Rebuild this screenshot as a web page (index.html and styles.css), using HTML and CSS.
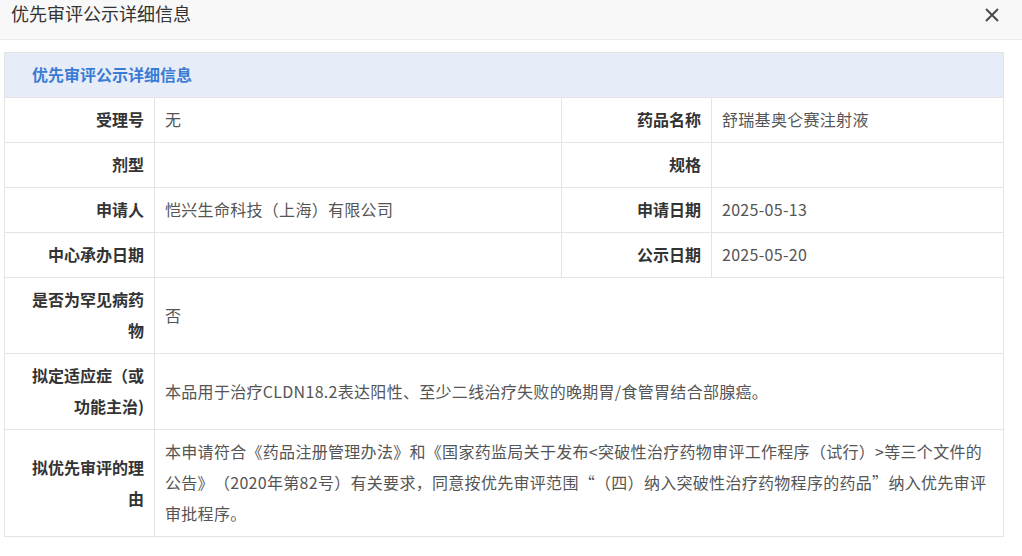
FILE: index.html
```html
<!DOCTYPE html>
<html lang="zh-CN">
<head>
    <meta charset="utf-8">
    <title>优先审评公示详细信息</title>
    <link rel="stylesheet" href="styles.css">
</head>
<body>
    <div class="dialog-header">
        <span class="dialog-title">优先审评公示详细信息</span>
        <span class="close-button">
            <svg width="16" height="16" viewBox="0 0 16 16">
                <path d="M2 2 L14 14 M14 2 L2 14" stroke="#4a4a4a" stroke-width="2" fill="none"/>
            </svg>
        </span>
    </div>

    <div class="dialog-body">
        <table class="detail-table">
            <colgroup>
                <col class="col-label">
                <col class="col-value">
                <col class="col-label">
                <col>
            </colgroup>
            <tr>
                <th colspan="4" class="table-caption">优先审评公示详细信息</th>
            </tr>
            <tr>
                <td class="label">受理号</td>
                <td class="value">无</td>
                <td class="label">药品名称</td>
                <td class="value">舒瑞基奥仑赛注射液</td>
            </tr>
            <tr>
                <td class="label">剂型</td>
                <td class="value"></td>
                <td class="label">规格</td>
                <td class="value"></td>
            </tr>
            <tr>
                <td class="label">申请人</td>
                <td class="value">恺兴生命科技（上海）有限公司</td>
                <td class="label">申请日期</td>
                <td class="value">2025-05-13</td>
            </tr>
            <tr>
                <td class="label">中心承办日期</td>
                <td class="value"></td>
                <td class="label">公示日期</td>
                <td class="value">2025-05-20</td>
            </tr>
            <tr>
                <td class="label">是否为罕见病药物</td>
                <td class="value" colspan="3">否</td>
            </tr>
            <tr>
                <td class="label">拟定适应症（或功能主治)</td>
                <td class="value" colspan="3">本品用于治疗CLDN18.2表达阳性、至少二线治疗失败的晚期胃/食管胃结合部腺癌。</td>
            </tr>
            <tr>
                <td class="label">拟优先审评的理由</td>
                <td class="value" colspan="3">本申请符合《药品注册管理办法》和《国家药监局关于发布&lt;突破性治疗药物审评工作程序（试行）&gt;等三个文件的公告》（2020年第82号）有关要求，同意按优先审评范围“（四）纳入突破性治疗药物程序的药品”纳入优先审评审批程序。</td>
            </tr>
        </table>
    </div>
</body>
</html>
```

FILE: styles.css
```css
body {
    margin: 0;
    font-family: "Noto Sans CJK SC", "Noto Sans", sans-serif;
    background-color: #fff;
    color: #333;
}

.dialog-header {
    height: 39px;
    background-color: #f8f8f8;
    border-bottom: 1px solid #eaeaea;
    display: flex;
    align-items: center;
    justify-content: space-between;
    padding: 0 22px 0 11px;
}

.dialog-title {
    font-size: 18px;
    color: #333;
    margin-top: -14px;
}

.close-button {
    display: flex;
    margin-top: -10px;
    cursor: pointer;
}

.dialog-body {
    padding: 12px 18px 0 4px;
}

.detail-table {
    width: 100%;
    border-collapse: collapse;
    table-layout: fixed;
    font-size: 16px;
    line-height: 31px;
    text-spacing-trim: space-all;
}

.col-label {
    width: 150px;
}

.col-value {
    width: 407px;
}

.detail-table td,
.detail-table th {
    border: 1px solid #e4e4e4;
    padding: 6px 10px 7px 20px;
    vertical-align: middle;
    word-break: break-all;
}

.table-caption {
    background-color: #e6edf8;
    color: #3a7bd5;
    text-align: left;
    font-weight: bold;
    padding-left: 27px !important;
}

.label {
    text-align: right;
    font-weight: bold;
    color: #333;
}

.detail-table .value {
    color: #555;
    padding-left: 10px;
    letter-spacing: 0.3px;
}
```
